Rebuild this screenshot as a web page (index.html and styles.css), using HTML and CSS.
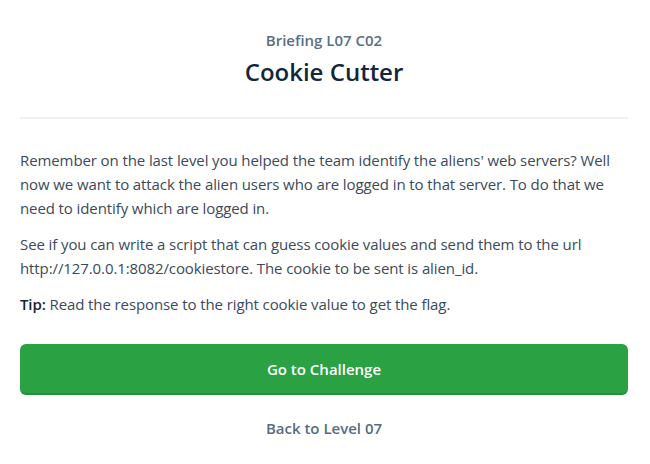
FILE: index.html
```html
<!DOCTYPE html>
<html>
<head>
<meta charset="utf-8">
<link rel="stylesheet" href="styles.css">
</head>
<body>
<div class="page">
  <header class="head">
    <div class="sub">Briefing L07 C02</div>
    <h1 class="title">Cookie Cutter</h1>
  </header>
  <hr class="divider">
  <div class="body">
    <p>Remember on the last level you helped the team identify the aliens' web servers? Well now we want to attack the alien users who are logged in to that server. To do that we need to identify which are logged in.</p>
    <p>See if you can write a script that can guess cookie values and send them to the url http://127.0.0.1:8082/cookiestore. The cookie to be sent is alien_id.</p>
    <p><strong class="tip">Tip:</strong> Read the response to the right cookie value to get the flag.</p>
  </div>
  <a class="btn" href="#">Go to Challenge</a>
  <a class="back" href="#">Back to Level 07</a>
</div>
</body>
</html>
```
FILE: styles.css
```css
* { box-sizing: border-box; }
html, body { margin: 0; padding: 0; background: #fff; }
body { font-family: "Open Sans", Lato, sans-serif; color: #3b4a5c; }
.page { padding: 30px 22px 0 20px; display: flex; flex-direction: column; }
.head { display: flex; flex-direction: column; align-items: center; }
.sub { font-size: 15px; font-weight: 600; color: #5a6e86; line-height: 20px; }
.title { margin: 7px 0 0; font-size: 24px; font-weight: 600; color: #13263d; line-height: 29px; }
.divider { border: 0; height: 2px; background: #edf1f5; margin: 31px 0 0; }
.body { margin-top: 29px; font-size: 15px; line-height: 24px; color: #3b4a5c; letter-spacing: -0.1px; }
.body p { margin: 0 0 12px; }
.tip { color: #1a2433; font-weight: 600; }
.btn { margin-top: 16px; height: 51px; border-radius: 6px; background: #2aa142; border-bottom: 2px solid #24913a; color: #fff; font-weight: 600; font-size: 15px; text-decoration: none; display: flex; align-items: center; justify-content: center; }
.back { margin-top: 23px; align-self: center; font-size: 15px; font-weight: 600; color: #566b84; text-decoration: none; line-height: 20px; }
```
